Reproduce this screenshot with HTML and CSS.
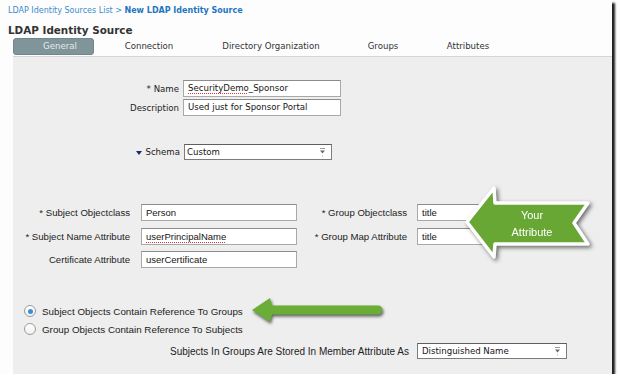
FILE: index.html
```html
<!DOCTYPE html>
<html>
<head>
<meta charset="utf-8">
<title>LDAP Identity Source</title>
<link rel="stylesheet" href="styles.css">
</head>
<body>
<div class="frame">
  <div class="header">
    <div class="crumb"><span class="crumb-link">LDAP Identity Sources List &gt; </span><span class="crumb-current">New LDAP Identity Source</span></div>
    <div class="title">LDAP Identity Source</div>
    <div class="tabs">
      <div class="tab tab-general active">General</div>
      <div class="tab tab-connection">Connection</div>
      <div class="tab tab-directory">Directory Organization</div>
      <div class="tab tab-groups">Groups</div>
      <div class="tab tab-attributes">Attributes</div>
    </div>
  </div>
  <div class="panel">
    <div class="basic">
      <div class="lbl">* Name</div>
      <div class="field"><span class="spell">SecurityDemo</span>_Sponsor</div>
      <div class="lbl">Description</div>
      <div class="field">Used just for Sponsor Portal</div>
    </div>
    <div class="schema">
      <div class="lbl"><span class="caret"></span>Schema</div>
      <div class="select select-schema">
        <span>Custom</span>
        <svg class="dd" width="5" height="9" viewBox="0 0 5 9"><rect x="0" y="0" width="5" height="1" fill="#9a9a9a"/><polygon points="0,2.5 5,2.5 2.5,5.5" fill="#6a6a6a"/><rect x="2" y="7.5" width="1" height="1" fill="#aaaaaa"/></svg>
      </div>
    </div>
    <div class="attrs">
      <div class="albl">* Subject Objectclass</div>
      <div class="afield">Person</div>
      <div class="albl albl-right">* Group Objectclass</div>
      <div class="afield">title</div>
      <div class="albl">* Subject Name Attribute</div>
      <div class="afield"><span class="spell">userPrincipalName</span></div>
      <div class="albl albl-right">* Group Map Attribute</div>
      <div class="afield">title</div>
      <div class="albl">Certificate Attribute</div>
      <div class="afield">userCertificate</div>
    </div>
    <div class="radios">
      <div class="radio-row"><span class="radio checked"></span><span class="radio-label">Subject Objects Contain Reference To Groups</span></div>
      <div class="radio-row"><span class="radio"></span><span class="radio-label">Group Objects Contain Reference To Subjects</span></div>
    </div>
    <div class="member">
      <div class="member-lbl">Subjects In Groups Are Stored In Member Attribute As</div>
      <div class="select select-member">
        <span>Distinguished Name</span>
        <svg class="dd" width="5" height="9" viewBox="0 0 5 9"><rect x="0" y="0" width="5" height="1" fill="#9a9a9a"/><polygon points="0,2.5 5,2.5 2.5,5.5" fill="#6a6a6a"/><rect x="2" y="7.5" width="1" height="1" fill="#aaaaaa"/></svg>
      </div>
    </div>
  </div>
  <svg class="overlay" width="620" height="383" viewBox="0 0 620 383">
    <g class="big-arrow">
      <polygon points="467,222 494,188 495,203 588,203 574,223 588,244 495,244 494,257" fill="#69a735" stroke="#ffffff" stroke-width="3.5" stroke-linejoin="round"/>
      <text x="532" y="219" text-anchor="middle" class="arrow-text">Your</text>
      <text x="532" y="236" text-anchor="middle" class="arrow-text">Attribute</text>
    </g>
    <g class="small-arrow">
      <path d="M252,310 L270,298 L272,305.5 L378,305.5 A4.5,4.5 0 0 1 378,314.5 L272,314.5 L270,322 Z" fill="#6aae37"/>
    </g>
  </svg>
</div>
</body>
</html>
```

FILE: styles.css
```css
html, body {
  margin: 0;
  padding: 0;
  background: #ffffff;
}

.frame {
  position: relative;
  width: 612px;
  height: 374px;
  background: #fdfdfd;
  box-shadow: 3px 3px 2px #1e1e1e;
  display: flex;
  flex-direction: column;
}

.header {
  height: 56px;
  display: flex;
  flex-direction: column;
}

.crumb {
  margin-top: 5px;
  padding-left: 8px;
  height: 12px;
  line-height: 12px;
  font-family: "DejaVu Sans", sans-serif;
  font-size: 8px;
  white-space: nowrap;
}

.crumb-link {
  color: #3a8ccb;
}

.crumb-current {
  color: #1f76bf;
  font-weight: bold;
}

.title {
  margin-top: 6px;
  padding-left: 8px;
  height: 14px;
  line-height: 14px;
  font-family: "DejaVu Sans", sans-serif;
  font-weight: bold;
  font-size: 10.4px;
  color: #333333;
  white-space: nowrap;
}

.tabs {
  display: flex;
  height: 17px;
  margin-top: 1px;
  margin-left: 13px;
}

.tab {
  height: 17px;
  line-height: 17px;
  text-align: center;
  font-family: "DejaVu Sans", sans-serif;
  font-size: 8.6px;
  color: #333333;
  white-space: nowrap;
  box-sizing: border-box;
}

.tab-general { width: 81px; padding-left: 13px; }
.tab-connection { width: 110px; }
.tab-directory { width: 134px; }
.tab-groups { width: 90px; }
.tab-attributes { width: 80px; }

.tab.active {
  background: #7f9599;
  border: 1px solid #71878b;
  border-radius: 3px;
  color: #e4eaec;
  line-height: 15px;
}

.panel {
  flex: 1;
  margin-left: 13px;
  background: #eeeeee;
  border-top: 1px solid #d6d6d6;
  display: flex;
  flex-direction: column;
}

.basic {
  margin-top: 23px;
  display: grid;
  grid-template-columns: 166px 158px;
  column-gap: 4px;
  row-gap: 2px;
}

.lbl {
  text-align: right;
  font-family: "DejaVu Sans", sans-serif;
  font-size: 8.6px;
  color: #222222;
  align-self: center;
  white-space: nowrap;
}

.field {
  height: 17px;
  line-height: 15px;
  box-sizing: border-box;
  background: #ffffff;
  border: 1px solid #a9a9a9;
  border-top-color: #8c8c8c;
  padding-left: 4px;
  font-family: "DejaVu Sans", sans-serif;
  font-size: 8.6px;
  color: #151515;
  white-space: nowrap;
  overflow: hidden;
}

.spell {
  text-decoration: underline dotted #e0393c;
  text-underline-offset: 2px;
}

.schema {
  margin-top: 28px;
  display: grid;
  grid-template-columns: 167px 148px;
  column-gap: 4px;
}

.caret {
  display: inline-block;
  width: 0;
  height: 0;
  border-left: 3.5px solid transparent;
  border-right: 3.5px solid transparent;
  border-top: 4px solid #1b2a6d;
  margin-right: 3px;
  vertical-align: middle;
}

.select {
  height: 16px;
  box-sizing: border-box;
  background: #ffffff;
  border: 1px solid #7c7c7c;
  border-top-color: #5e5e5e;
  display: flex;
  align-items: center;
  justify-content: space-between;
  padding: 0 6px 0 2px;
  font-family: "DejaVu Sans", sans-serif;
  font-size: 8.6px;
  color: #151515;
  white-space: nowrap;
}

.dd {
  display: block;
}

.attrs {
  margin-top: 44px;
  display: grid;
  grid-template-columns: 128px 156px 120px 156px;
  grid-template-rows: 17px 17px 17px;
  row-gap: 6.5px;
}

.albl {
  text-align: right;
  padding-right: 11px;
  font-family: "Liberation Sans", Arial, sans-serif;
  font-size: 9.6px;
  color: #222222;
  align-self: center;
  white-space: nowrap;
}

.albl-right {
  padding-right: 10px;
}

.afield {
  height: 17px;
  line-height: 15px;
  box-sizing: border-box;
  background: #ffffff;
  border: 1px solid #a9a9a9;
  border-top-color: #8c8c8c;
  padding-left: 4px;
  font-family: "Liberation Sans", Arial, sans-serif;
  font-size: 9.5px;
  color: #151515;
  white-space: nowrap;
  overflow: hidden;
}

.radios {
  margin-top: 34px;
  display: flex;
  flex-direction: column;
  padding-left: 11px;
}

.radio-row {
  height: 18px;
  display: flex;
  align-items: center;
  gap: 6px;
}

.radio {
  width: 12px;
  height: 12px;
  box-sizing: border-box;
  border: 1px solid #9c9c9c;
  border-radius: 50%;
  background: linear-gradient(#ffffff, #f1f1f1);
  display: flex;
  align-items: center;
  justify-content: center;
}

.radio.checked::after {
  content: "";
  width: 5px;
  height: 5px;
  border-radius: 50%;
  background: #3a8fd8;
}

.radio-label {
  font-family: "Liberation Sans", Arial, sans-serif;
  font-size: 9.8px;
  color: #222222;
  white-space: nowrap;
}

.member {
  margin-top: 5px;
  display: grid;
  grid-template-columns: 404px 150px;
}

.member-lbl {
  text-align: right;
  padding-right: 8px;
  font-family: "Liberation Sans", Arial, sans-serif;
  font-size: 10px;
  color: #222222;
  align-self: center;
  white-space: nowrap;
}

.select-member {
  padding-left: 4px;
}

.overlay {
  position: absolute;
  left: 0;
  top: 0;
  pointer-events: none;
}

.big-arrow {
  filter: drop-shadow(2px 2px 2px rgba(0, 0, 0, 0.55));
}

.small-arrow {
  filter: drop-shadow(1px 2px 1.5px rgba(0, 0, 0, 0.6));
}

.arrow-text {
  font-family: "Liberation Sans", Arial, sans-serif;
  font-size: 11px;
  fill: #ffffff;
}
```
